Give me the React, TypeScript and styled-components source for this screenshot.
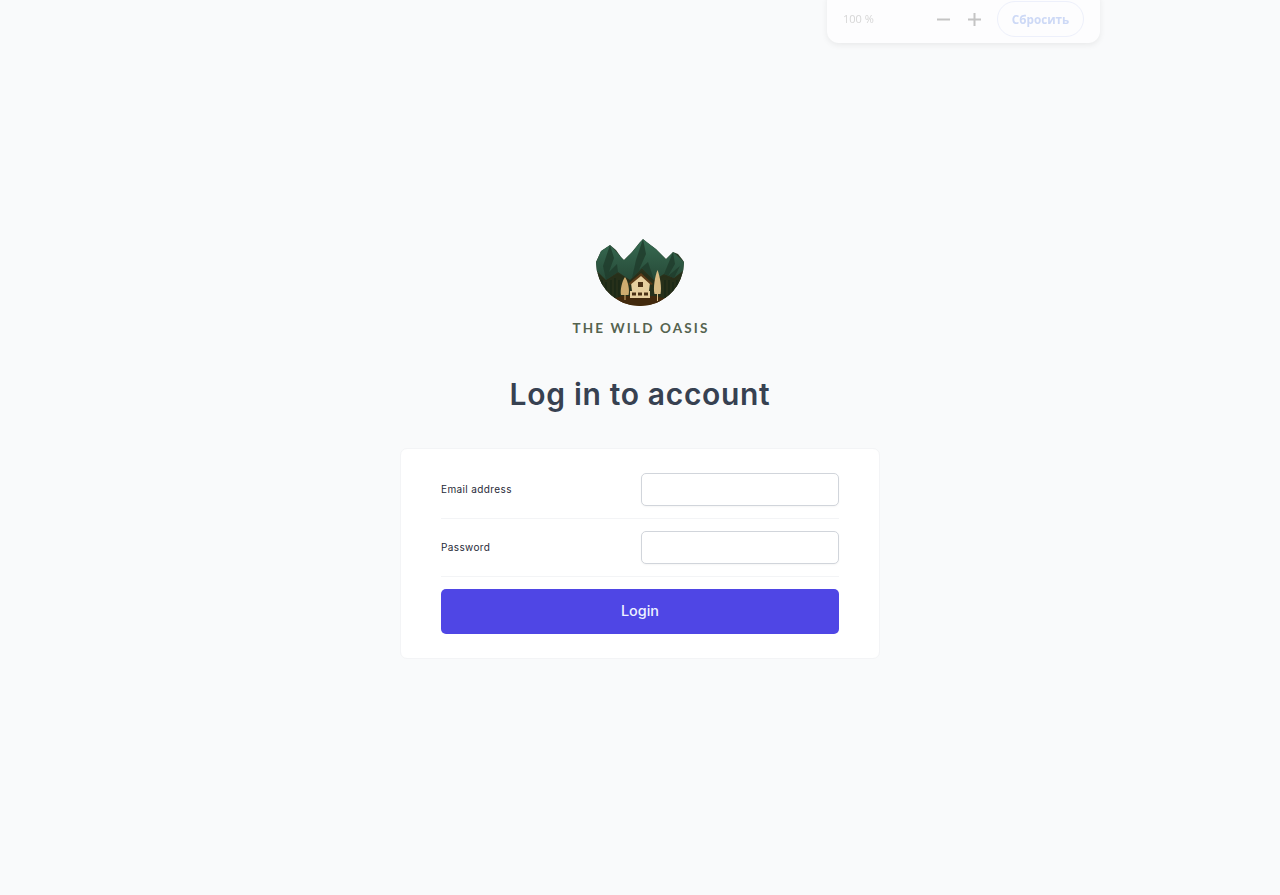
import React from "react";
import styled, { createGlobalStyle } from "styled-components";

const Global = createGlobalStyle`
  * { box-sizing: border-box; margin: 0; padding: 0; }
  html, body { background: #f9fafb; }
  body { font-family: "Inter", "Noto Sans", sans-serif; color: #374151; }
`;

const Page = styled.main`
  min-height: 895px;
  display: grid;
  grid-template-columns: 480px;
  justify-content: center;
  align-content: center;
  gap: 32px;
`;

const Logo = styled.div`
  height: 106px;
  padding-top: 2px;
  display: flex;
  flex-direction: column;
  align-items: center;
`;

const LogoArt = styled.svg`
  display: block;
  width: 90px;
  height: 70px;
  margin-left: 1px;
  filter: blur(0.4px);
`;

const LogoName = styled.span`
  margin-top: 12px;
  font-family: "Lato", sans-serif;
  font-size: 13.5px;
  line-height: 16px;
  font-weight: 700;
  letter-spacing: 2.15px;
  margin-right: -2px;
  color: #55634f;
  white-space: nowrap;
`;

const Heading = styled.h4`
  height: 42px;
  font-size: 30px;
  line-height: 40px;
  font-weight: 600;
  text-align: center;
  color: #374151;
  letter-spacing: 0.68px;
`;

const Card = styled.form`
  height: 211px;
  padding: 24px 40px;
  background: #fff;
  border: 1px solid #f3f4f6;
  border-radius: 7px;
`;

const Row = styled.div`
  display: grid;
  grid-template-columns: 200px 198px;
  align-items: center;
  padding: ${(p: { $first?: boolean }) => (p.$first ? "0 0 12px" : "12px 0")};
  border-bottom: 1px solid #f3f4f6;
`;

const Label = styled.label`
  font-size: 10px;
  line-height: 14px;
  margin-top: -2px;
  font-weight: 400;
  letter-spacing: 0.38px;
  color: #1f2937;
`;

const Input = styled.input`
  width: 198px;
  height: 33px;
  background: #fff;
  border: 1px solid #d1d5db;
  border-radius: 5px;
  box-shadow: 0 1px 2px rgba(0, 0, 0, 0.04);
`;

const Submit = styled.button`
  display: block;
  width: 100%;
  height: 45px;
  margin-top: 12px;
  padding-bottom: 2px;
  border: none;
  border-radius: 5px;
  background: #4f46e5;
  color: #eef2ff;
  font-family: inherit;
  font-size: 14.4px;
  font-weight: 500;
`;

const ZoomBar = styled.div`
  position: absolute;
  top: -10px;
  left: 827px;
  width: 273px;
  height: 53px;
  padding: 10px 16px 0;
  display: flex;
  align-items: flex-start;
  background: #fdfdfe;
  border-radius: 12px;
  box-shadow: 0 2px 6px rgba(0, 0, 0, 0.07);
  filter: blur(0.6px);
  font-family: "Open Sans", sans-serif;
`;

const ZoomValue = styled.span`
  width: 91px;
  margin-top: 1px;
  font-size: 11px;
  line-height: 36px;
  color: #d6d6d6;
`;

const ZoomIcon = styled.svg`
  display: block;
  width: 19px;
  height: 19px;
  margin-top: 10px;
  margin-right: 12px;
  color: #c4c4c4;
`;

const ResetButton = styled.button`
  width: 87px;
  height: 36px;
  margin-left: 1px;
  margin-top: 1px;
  border: 1px solid #edf0fb;
  border-radius: 18px;
  background: transparent;
  color: #cdd9f6;
  font-family: inherit;
  font-size: 11.7px;
  font-weight: 700;
`;

function Art() {
  return (
    <LogoArt viewBox="0 0 90 70" aria-hidden="true">
      <defs>
        <clipPath id="bowl">
          <path d="M0 24 L5 13 L14 7 L20 12 L25 19 L28 22 L36 14 L44 4 L47 1 L52 5 L60 11 L70 21 L77 14 L82 16 L86 21 L88 24 A44 44 0 0 1 0 24 Z" />
        </clipPath>
        <linearGradient id="soil" x1="0" y1="0" x2="0" y2="1">
          <stop offset="0" stopColor="#2c4a36" />
          <stop offset="0.55" stopColor="#29301a" />
          <stop offset="0.82" stopColor="#33220d" />
          <stop offset="1" stopColor="#6a4516" />
        </linearGradient>
        <linearGradient id="rock" x1="0" y1="0" x2="0" y2="1">
          <stop offset="0" stopColor="#376b52" />
          <stop offset="1" stopColor="#274a38" />
        </linearGradient>
      </defs>
      <g clipPath="url(#bowl)">
        <rect width="90" height="70" fill="url(#soil)" />
        <path d="M0 24 L5 13 L14 7 L25 19 L28 22 L36 14 L47 1 L60 11 L70 21 L77 14 L88 24 L88 32 L78 40 L68 36 L58 42 L46 30 L34 42 L22 34 L10 42 L0 32 Z" fill="url(#rock)" />
        <path d="M14 7 L18 20 L13 34 L21 26 L22 34 L10 42 L7 28 Z M47 1 L50 16 L43 32 L52 24 L58 42 L46 30 L36 40 L40 22 Z M77 14 L79 26 L72 38 L84 28 L78 40 L68 36 L73 24 Z" fill="#203d2d" opacity="0.85" />
        <path d="M0 34 L10 43 L22 36 L34 44 L46 33 L58 44 L68 38 L78 42 L88 33 L88 60 L0 60 Z" fill="#27301a" />
        <path d="M6 42 V56 M10 44 V58 M15 42 V60 M19 40 V60 M23 42 V60 M69 42 V60 M73 42 V58 M77 44 V56 M81 42 V52" stroke="#1c2a17" strokeWidth="1.6" />
        <path d="M14 62 L26 58 L60 58 L74 62 L60 70 L30 70 Z" fill="#42290d" />
      </g>
      <path d="M35 45 L45 36 L54 45 L53 53 L54 53 L54 60 L34 60 L34 53 L36 53 Z" fill="#e6cf9e" />
      <path d="M32 46 L45 35 L57 46 L55 47 L45 38 L34 47 Z" fill="#5a3a17" />
      <path d="M36 54.5 H40 V57.5 H36 Z M42 54.5 H46 V57.5 H42 Z M48 54.5 H52 V57.5 H48 Z M42 44 H47 V49 H42 Z" fill="#4a3115" />
      <path d="M29 39 C32 43 34 52 32.5 57 L29.5 57 L29.5 62 L28.5 62 L28.5 57 L25 57 C24 52 26 43 29 39 Z" fill="#cfac6f" />
      <path d="M61.5 32 C64 38 66 50 64.5 56 L62 56 L62 63 L61 63 L61 56 L58.5 56 C57 50 59 38 61.5 32 Z" fill="#d9bc84" />
    </LogoArt>
  );
}

export default function App() {
  return (
    <>
      <Global />
      <Page>
        <Logo>
          <Art />
          <LogoName>THE WILD OASIS</LogoName>
        </Logo>
        <Heading>Log in to account</Heading>
        <Card onSubmit={(e) => e.preventDefault()}>
          <Row $first>
            <Label htmlFor="email">Email address</Label>
            <Input id="email" type="email" />
          </Row>
          <Row>
            <Label htmlFor="password">Password</Label>
            <Input id="password" type="password" />
          </Row>
          <Submit type="submit">Login</Submit>
        </Card>
      </Page>
      <ZoomBar>
        <ZoomValue>100 %</ZoomValue>
        <ZoomIcon viewBox="0 0 19 19" fill="none" stroke="currentColor" strokeWidth="2">
          <path d="M3 9.5 H16" />
        </ZoomIcon>
        <ZoomIcon viewBox="0 0 19 19" fill="none" stroke="currentColor" strokeWidth="2">
          <path d="M3 9.5 H16 M9.5 3 V16" />
        </ZoomIcon>
        <ResetButton type="button">Сбросить</ResetButton>
      </ZoomBar>
    </>
  );
}
